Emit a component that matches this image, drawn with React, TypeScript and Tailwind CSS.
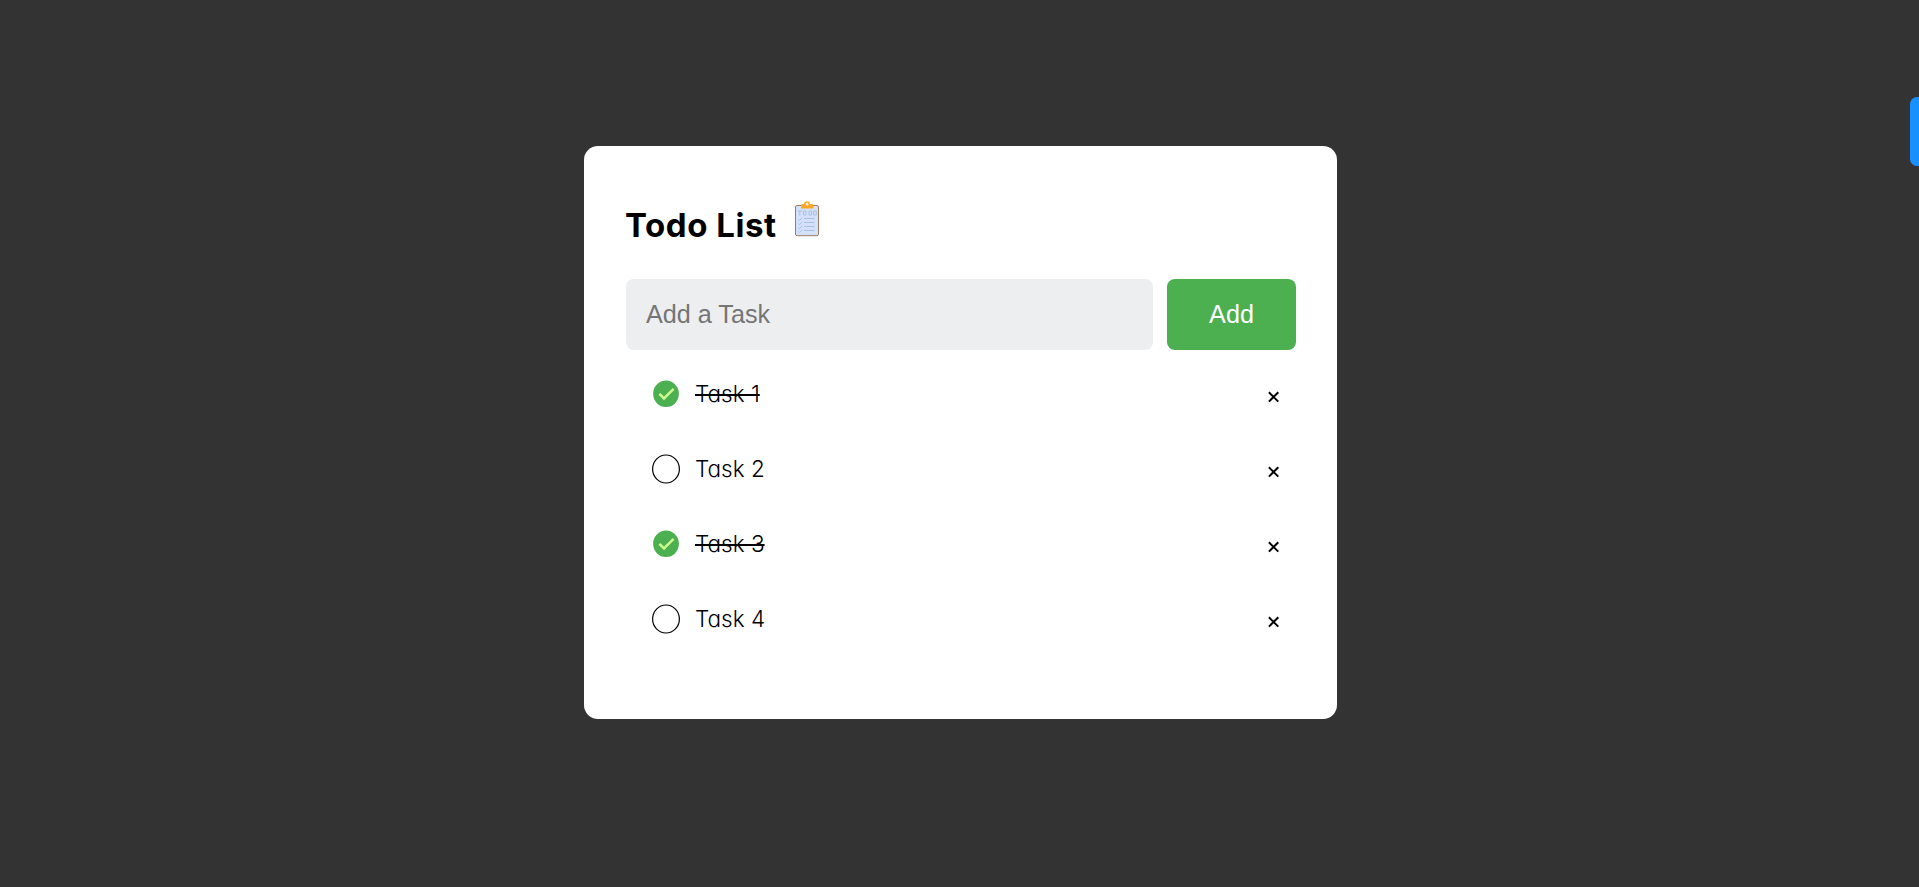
const tasks = [
  { name: "Task 1", done: true },
  { name: "Task 2", done: false },
  { name: "Task 3", done: true },
  { name: "Task 4", done: false },
];

function Clipboard() {
  return (
    <svg width="24" height="36" viewBox="0 0 24 36" className="mt-px shrink-0">
      <rect x="0.5" y="4.5" width="23" height="30.2" rx="1.6" fill="#d5e1fb" stroke="#a07a5e" />
      <path d="M6 7.4V4.2Q6 3 7.2 3H8.8Q9.4 0.2 12 0.2T15 3H17Q18.2 3 18.2 4.2V7.4Z" fill="#ffa726" />
      <circle cx="12" cy="3.2" r="1.4" fill="#fff3e0" />
      <g fill="none" stroke="#a6c3de" strokeWidth="1">
        <path d="M2.4 10H7.2M4.8 10V14.5M8.5 10H11V14H8.5ZM14 10V14H16.6V10ZM18.6 10H21.3V14H18.6Z" />
        <path d="M3.4 18.4l1.2 1.1 2.5-2.8M3.4 22.5l1.2 1.1 2.5-2.8M3.4 26.5l1.2 1.1 2.5-2.8M3.4 30.5l1.2 1.1 2.5-2.8M9 17.5h10.5M9 21.5h10.5M9 25.5h10.5M9 29.5h10.5" />
      </g>
    </svg>
  );
}

function Mark({ done }: { done: boolean }) {
  return (
    <svg width="28" height="30" viewBox="0 0 28 30" className="mt-px shrink-0">
      {done ? (
        <>
          <ellipse cx="14" cy="14.8" rx="12.9" ry="13.2" fill="#4caf50" />
          <path d="M7.4 14.9L12 19.4L21.6 9.8" fill="none" stroke="#ccff90" strokeWidth="2.5" />
        </>
      ) : (
        <ellipse cx="14" cy="15" rx="13.4" ry="14" fill="none" stroke="#000" strokeWidth="1.2" />
      )}
    </svg>
  );
}

export default function App() {
  return (
    <div className="flex h-[887px] w-full items-start overflow-hidden bg-[#333333] font-['Inter',sans-serif] text-black">
      <main className="ml-[584px] mt-[146px] h-[573px] w-[753px] shrink-0 rounded-[14px] bg-white px-[42px] pt-[54px]">
        <div className="flex h-[79px] items-start">
          <h1 className="-ml-px w-[170px] shrink-0 whitespace-nowrap text-[33px] font-bold leading-[50px] tracking-[0.55px]">Todo List</h1>
          <Clipboard />
        </div>
        <form className="flex gap-[14px]" onSubmit={(e) => e.preventDefault()}>
          <input
            placeholder="Add a Task"
            className="h-[71px] w-[527px] shrink-0 rounded-[8px] bg-[#edeef0] px-5 font-['Liberation_Sans',Arial,sans-serif] text-[25.2px] outline-none placeholder:text-[#757575]"
          />
          <button className="h-[71px] w-[129px] shrink-0 rounded-[8px] bg-[#4caf50] font-['Liberation_Sans',Arial,sans-serif] text-[25.2px] text-white">
            Add
          </button>
        </form>
        <ul className="mt-[6px]">
          {tasks.map((t) => (
            <li key={t.name} className="flex h-[75px] items-center pl-[26px] pr-[15px]">
              <Mark done={t.done} />
              <span
                className={
                  "ml-[15px] whitespace-nowrap text-[22.5px] font-[340] leading-[40px] [font-feature-settings:'cv11'] " +
                  (t.done ? "line-through decoration-2" : "")
                }
              >
                {t.name}
              </span>
              <button className="ml-auto mt-[6px] flex h-[12px] w-[12px] items-center" aria-label={`Remove ${t.name}`}>
                <svg width="12" height="12" viewBox="0 0 12 12">
                  <path d="M0.9 1.2L10.3 10.6M10.3 1.2L0.9 10.6" stroke="#000" strokeWidth="2" />
                </svg>
              </button>
            </li>
          ))}
        </ul>
      </main>
      <div className="ml-auto mt-[97px] h-[69px] w-[9px] shrink-0 rounded-l-[7px] bg-[#1890ff]" />
    </div>
  );
}
